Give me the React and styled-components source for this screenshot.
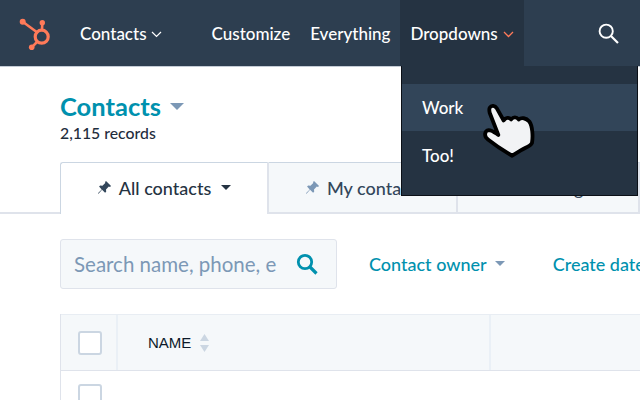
import styled, { createGlobalStyle } from "styled-components";

const GlobalStyle = createGlobalStyle`
    html, body {
        margin: 0;
        padding: 0;
        width: 640px;
        height: 400px;
        overflow: hidden;
        background: #fff;
        font-family: "Lato", "Liberation Sans", sans-serif;
    }
`

const Page = styled.div`
    position: relative;
    width: 640px;
    height: 400px;
    overflow: hidden;
`

const Nav = styled.nav`
    display: flex;
    align-items: stretch;
    height: 66px;
    background: #2d3e50;
    border-bottom: 1px solid #c4ccd6;
`

const Logo = styled.svg`
    flex: none;
    width: 34px;
    height: 34px;
    margin: 17px 0 0 19px;
`

const NavItem = styled.div`
    display: flex;
    align-items: center;
    flex: none;
    margin-left: ${props => props.left}px;
    color: #fff;
    font-size: 17px;
    font-weight: 500;
    white-space: nowrap;
`

const DropdownButton = styled(NavItem)`
    width: 124px;
    padding-left: 10px;
    box-sizing: border-box;
    background: #253342;
`

const SearchButton = styled.div`
    display: flex;
    align-items: center;
    margin-left: auto;
    padding-right: 21px;
`

const Menu = styled.div`
    position: absolute;
    left: 401px;
    top: 66px;
    width: 237px;
    height: 130px;
    padding-top: 18px;
    box-sizing: border-box;
    background: #253342;
    border: 1px solid #0b1017;
    border-top: none;
    z-index: 2;
`

const MenuItem = styled.div`
    display: flex;
    align-items: center;
    height: 47px;
    padding-left: 20px;
    color: #fff;
    font-size: 17px;
    font-weight: 500;
    background: ${props => props.active ? "#324559" : "transparent"};
    &:last-child {
        height: 49px;
    }
`

const HandCursor = styled.svg`
    position: absolute;
    left: 479px;
    top: 98px;
    width: 60px;
    height: 62px;
    z-index: 3;
`

const Header = styled.header`
    padding: 24px 0 0 60px;
`

const TitleRow = styled.div`
    display: flex;
    align-items: center;
    gap: 9px;
`

const Title = styled.h1`
    margin: 0;
    color: #0091ae;
    font-size: 25.5px;
    line-height: 30px;
    font-weight: 700;
`

const Caret = styled.span`
    display: inline-block;
    flex: none;
    width: 0;
    height: 0;
    margin-left: ${props => props.left || 0}px;
    border-left: ${props => props.size}px solid transparent;
    border-right: ${props => props.size}px solid transparent;
    border-top: ${props => props.size}px solid ${props => props.color};
`

const Records = styled.div`
    margin-top: 2px;
    color: #1f2d3d;
    font-size: 15.8px;
    line-height: 20px;
    font-weight: 500;
`

const Tabs = styled.div`
    display: flex;
    height: 52px;
    margin-top: 19px;
    padding-left: 60px;
    box-sizing: border-box;
    border-bottom: 2px solid #dfe3eb;
`

const Tab = styled.div`
    display: flex;
    align-items: center;
    justify-content: ${props => props.active ? "center" : "flex-start"};
    flex: none;
    width: ${props => props.width}px;
    height: ${props => props.active ? "52px" : "50px"};
    padding-left: ${props => props.pad || 0}px;
    padding-bottom: ${props => props.active ? "2px" : "0"};
    box-sizing: border-box;
    gap: 7px;
    background: ${props => props.active ? "#fff" : "#f5f8fa"};
    border-top: 1px solid #cbd6e2;
    border-left: ${props => props.active ? "1px solid #cbd6e2" : "none"};
    border-right: 2px solid #dfe3eb;
    border-radius: ${props => props.active ? "3px 0 0 0" : "0"};
    color: ${props => props.active ? "#253342" : "#33475b"};
    font-size: 18px;
    font-weight: 500;
    white-space: nowrap;
`

const Filters = styled.div`
    display: flex;
    align-items: center;
    margin: 24px 0 0 60px;
    height: 51px;
    white-space: nowrap;
`

const SearchBox = styled.div`
    display: flex;
    align-items: center;
    flex: none;
    width: 277px;
    height: 50px;
    padding: 0 17px 0 13px;
    box-sizing: border-box;
    background: #f5f8fa;
    border: 1px solid #dfe3eb;
    border-radius: 3px;
`

const Placeholder = styled.div`
    width: 203px;
    overflow: hidden;
    color: #7c98b6;
    font-size: 20.5px;
    white-space: nowrap;
`

const SearchIcon = styled.svg`
    width: 24px;
    height: 24px;
    margin-left: auto;
`

const FilterLink = styled.div`
    display: flex;
    align-items: center;
    flex: none;
    gap: 8px;
    margin-left: ${props => props.left}px;
    color: #0091ae;
    font-size: 18px;
    font-weight: 500;
`

const Table = styled.div`
    margin: 25px 0 0 60px;
    border-left: 1px solid #dfe3eb;
`

const HeaderRow = styled.div`
    display: grid;
    grid-template-columns: 57px 373px 1fr;
    height: 57px;
    box-sizing: border-box;
    background: #f5f8fa;
    border-top: 1px solid #e8edf3;
    border-bottom: 1px solid #dfe3eb;
`

const Cell = styled.div`
    display: flex;
    align-items: center;
    padding-left: ${props => props.pad || 0}px;
    border-right: ${props => props.last ? "none" : "2px solid #eaf0f6"};
    color: #0c1a2a;
    font-family: "Liberation Sans", sans-serif;
    font-size: 15px;
`

const Checkbox = styled.div`
    flex: none;
    width: 24px;
    height: 24px;
    box-sizing: border-box;
    background: #fff;
    border: 2px solid #cbd6e2;
    border-radius: 3px;
`

const SortIcon = styled.svg`
    width: 11px;
    height: 20px;
    margin-left: 8px;
`

const BodyRow = styled.div`
    display: flex;
    padding: 13px 0 0 17px;
`

const Pin = ({ color, size = 15 }) => (
    <svg width={size} height={size} viewBox="0 0 16 16">
        <path d="M9.6 1 15 6.4 13.8 7.4 12.6 7 9.6 10 9.8 12.6 8.6 13.6 5.4 10.4 1.6 14.6 1 14 5 10 2.2 7 3.4 5.8 5.8 6.2 8.8 3.2 8.6 2Z" fill={color} />
    </svg>
)

const App = () => {
    return (
        <Page>
            <GlobalStyle />
            <Nav>
                <Logo viewBox="0 0 34 34">
                    <g fill="none" stroke="#ff7a59" strokeWidth="2.6">
                        <circle cx="22.7" cy="19.7" r="6.5" strokeWidth="3.2" />
                        <path d="M3.7 4.700 18 15.200" />
                        <path d="M23.300 5.700 23 13" />
                        <path d="M18 25 12.700 30.300" />
                    </g>
                    <g fill="#ff7a59">
                        <circle cx="3.700" cy="4.700" r="3" />
                        <circle cx="23.300" cy="5.700" r="2.700" />
                        <circle cx="12.700" cy="30.300" r="2.800" />
                    </g>
                </Logo>
                <NavItem left={27}>
                    Contacts
                    <svg width="11" height="7" viewBox="0 0 11 7" style={{ marginLeft: 4, marginTop: 2 }}>
                        <path d="M1 1 5.5 5.5 10 1" fill="none" stroke="#fff" strokeWidth="1.2" />
                    </svg>
                </NavItem>
                <NavItem left={50}>Customize</NavItem>
                <NavItem left={20}>Everything</NavItem>
                <DropdownButton left={10}>
                    Dropdowns
                    <svg width="11" height="7" viewBox="0 0 11 7" style={{ marginLeft: 5, marginTop: 2 }}>
                        <path d="M1 1 5.5 5.5 10 1" fill="none" stroke="#ff7a59" strokeWidth="1.3" />
                    </svg>
                </DropdownButton>
                <SearchButton>
                    <svg width="21" height="21" viewBox="0 0 21 21">
                        <circle cx="8.2" cy="8.2" r="6.6" fill="none" stroke="#fff" strokeWidth="1.9" />
                        <path d="M13 13 20 20" stroke="#fff" strokeWidth="2.2" />
                    </svg>
                </SearchButton>
            </Nav>

            <Menu>
                <MenuItem active>Work</MenuItem>
                <MenuItem>Too!</MenuItem>
            </Menu>

            <HandCursor viewBox="0 0 56 58">
                <path
                    d="M10 9C11.500 6.500 15 7 16.500 9.500L23 21C25 18 28 18 30 20C32 17.500 35 17.500 37 20C39.500 18 44 18.500 47 22C50 26 50.500 36 49.500 42C48.500 45 44 46 39 49L31 54C24 50 15 44 8 38.500C4.500 36 5 30.500 9 30C12 30 15 32.500 18 34.500L10 14C9.500 12 9.200 10.500 10 9Z"
                    fill="#f2f3f5"
                    stroke="#000"
                    strokeWidth="3.6"
                    strokeLinejoin="round"
                />
            </HandCursor>

            <Header>
                <TitleRow>
                    <Title>Contacts</Title>
                    <Caret size={7.5} color="#7c98b6" />
                </TitleRow>
                <Records>2,115 records</Records>
            </Header>

            <Tabs>
                <Tab active width={209}>
                    <Pin color="#33475b" />
                    All contacts
                    <Caret size={5} color="#253342" left={3} />
                </Tab>
                <Tab width={189} pad={36}>
                    <Pin color="#7c98b6" />
                    My contacts
                </Tab>
                <Tab width={182} pad={64}>Unassigned</Tab>
            </Tabs>

            <Filters>
                <SearchBox>
                    <Placeholder>Search name, phone, email</Placeholder>
                    <SearchIcon viewBox="0 0 24 24">
                        <circle cx="10" cy="10" r="6.700" fill="none" stroke="#0091ae" strokeWidth="2.800" />
                        <path d="M15 15 21.500 21.500" stroke="#0091ae" strokeWidth="3.200" />
                    </SearchIcon>
                </SearchBox>
                <FilterLink left={32}>
                    Contact owner
                    <Caret size={5.5} color="#7c98b6" />
                </FilterLink>
                <FilterLink left={48}>Create date</FilterLink>
            </Filters>

            <Table>
                <HeaderRow>
                    <Cell pad={17}><Checkbox /></Cell>
                    <Cell pad={30}>
                        NAME
                        <SortIcon viewBox="0 0 11 20">
                            <path d="M5.500 1 10 8H1Z" fill="#cbd6e2" />
                            <path d="M5.500 19 10 12H1Z" fill="#cbd6e2" />
                        </SortIcon>
                    </Cell>
                    <Cell last />
                </HeaderRow>
                <BodyRow>
                    <Checkbox />
                </BodyRow>
            </Table>
        </Page>
    );
}

export default App;
